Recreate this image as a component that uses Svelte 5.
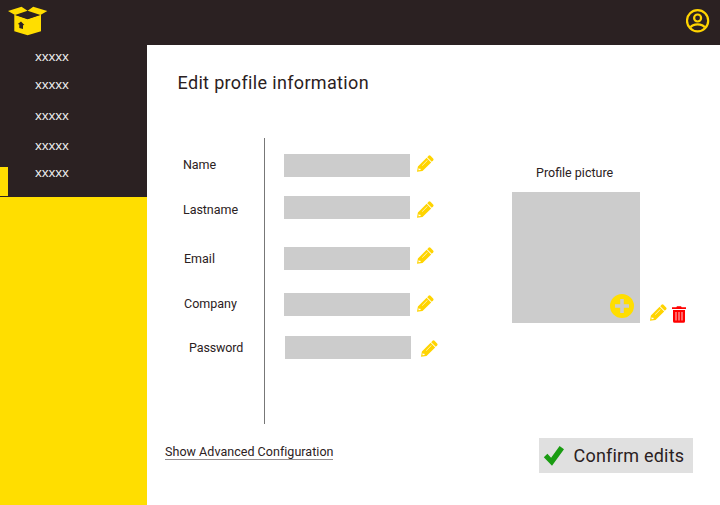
<script>
  const nav = [3, 12, 15, 14, 11];
  const labels = [
    { text: 'Name', gap: 19, indent: 0, spacing: -0.05 },
    { text: 'Lastname', gap: 29, indent: 0, spacing: -0.05 },
    { text: 'Email', gap: 33, indent: 1, spacing: 0 },
    { text: 'Company', gap: 29, indent: 1, spacing: 0 },
    { text: 'Password', gap: 28, indent: 6, spacing: -0.12 }
  ];
  const fields = [
    { gap: 16, indent: 0 },
    { gap: 19, indent: 0 },
    { gap: 28, indent: 0 },
    { gap: 23, indent: 0 },
    { gap: 20, indent: 1 }
  ];
  const pencils = [
    { gap: 17, indent: 0 },
    { gap: 29, indent: 0 },
    { gap: 29, indent: 0 },
    { gap: 31, indent: 0 },
    { gap: 28, indent: 4 }
  ];
</script>

{#snippet pencil()}
  <svg class="pencil" width="17" height="17" viewBox="0 0 17 17">
    <path fill="#ffd400" fill-rule="evenodd" d="M.9 11.500 9.600 2.800l4.600 4.600L5.500 16 0 16.800ZM1.700 13l-.3 2.300 2.300-.4-.3-1.100-1.200-.1ZM5 10.400l.4.400 5.200-5.200-.4-.4Z" />
    <path fill="#ffd400" d="m10.200 2.200 1.300-1.400q1-.9 2 0l2.600 2.600q.9 1 0 2L14.800 6.800Z" />
  </svg>
{/snippet}

<div class="app">
  <header>
    <svg class="logo" width="40" height="30" viewBox="0 0 40 30">
      <path fill="#ffde00" d="M6.300 7.800 19.600 12.200 33 7.800V24.300L19.600 28.200 6.300 24.300Z" />
      <path fill="#2b2122" d="M7 7.800 19.600 3.500 32.500 7.800 19.600 12Z" />
      <path fill="#ffde00" d="M0 4 13.500-.2 19.600 3.700 7 8ZM19.600 3.700 25.200-.2 39.300 4 32.400 8Z" />
      <path fill="#2b2122" d="m13 14.600 3.400 3.500-1.400.2v3.700l-3.700-.9v-3.500l-1.500-.5Z" />
    </svg>
    <svg class="user" width="24" height="24" viewBox="0 0 24 24" fill="none" stroke="#ffd400" stroke-width="2.200">
      <circle cx="11.600" cy="11.800" r="10.600" />
      <circle cx="11.600" cy="9" r="3.500" />
      <path d="M4.400 18.500c1.600-2.700 4-3.100 7.200-3.100s5.600.4 7.200 3.100" />
    </svg>
  </header>
  <div class="body">
    <aside>
      <nav>
        {#each nav as gap, i}
          <a style:margin-top="{gap}px" class:active={i === 4}>xxxxx</a>
        {/each}
      </nav>
    </aside>
    <main>
      <h1>Edit profile information</h1>
      <div class="content">
        <div class="labels">
          {#each labels as l}
            <span style:margin-top="{l.gap}px" style:margin-left="{l.indent}px" style:letter-spacing="{l.spacing}px">{l.text}</span>
          {/each}
        </div>
        <div class="fields">
          {#each fields as f}
            <div class="field" style:margin-top="{f.gap}px" style:margin-left="{f.indent}px"></div>
          {/each}
        </div>
        <div class="pencils">
          {#each pencils as p}
            <div class="edit" style:margin-top="{p.gap}px" style:margin-left="{p.indent}px">{@render pencil()}</div>
          {/each}
        </div>
        <div class="profile">
          <span class="caption">Profile picture</span>
          <div class="picture-row">
            <div class="picture">
              <svg width="24" height="24" viewBox="0 0 24 24">
                <path fill="#ffde00" fill-rule="evenodd" d="M12 0a12 12 0 1 0 0 24 12 12 0 0 0 0-24M10.200 5h3.600v5.200h5.200v3.600h-5.200v5.200h-3.600v-5.200H5v-3.600h5.200Z" />
              </svg>
            </div>
            <div class="edit picture-edit">{@render pencil()}</div>
            <svg class="trash" width="14" height="17" viewBox="0 0 14 17">
              <path fill="#f00" fill-rule="evenodd" d="M0 1.200h4.300L5 .2h4l.7 1h4.300V3H0ZM1 4h12v11.200q0 1.500-1.500 1.500h-9Q1 16.700 1 15.200ZM3.600 6v8.500h.8V6ZM6.600 6v8.500h.8V6ZM9.600 6v8.500h.8V6Z" />
            </svg>
          </div>
        </div>
      </div>
      <footer>
        <a class="advanced">Show Advanced Configuration</a>
        <button>
          <svg width="22" height="22" viewBox="0 0 22 22"><path fill="#1a9c12" d="m.8 12.200 3.600-3.500 3.700 4.100L16.600.9l4.400 3.300L9 20.800Z" /></svg>
          <span>Confirm edits</span>
        </button>
      </footer>
    </main>
  </div>
</div>

<style>
  .app {
    width: 720px;
    height: 505px;
    overflow: hidden;
    display: flex;
    flex-direction: column;
    background: #fff;
    color: #2b2122;
    font-family: Roboto, "Liberation Sans", sans-serif;
  }
  header {
    height: 45px;
    flex: none;
    box-sizing: border-box;
    padding: 7px 10px 0 8px;
    display: flex;
    justify-content: space-between;
    background: #2b2122;
  }
  .logo { overflow: visible; }
  .user { margin-top: 2px; }
  .body { flex: 1; display: flex; min-height: 0; }
  aside { width: 147px; flex: none; background: #ffde00; }
  nav {
    height: 152px;
    display: flex;
    flex-direction: column;
    background: #2b2122;
    overflow: hidden;
  }
  nav a {
    position: relative;
    flex: none;
    padding-left: 35px;
    font: 13px/16px "Noto Sans", sans-serif;
    letter-spacing: -0.1px;
    color: #eee;
  }
  nav a.active::before {
    content: "";
    position: absolute;
    left: 0;
    top: 3px;
    width: 8px;
    height: 29px;
    background: #ffde00;
  }
  main { flex: 1; min-width: 0; display: flex; flex-direction: column; }
  h1 {
    margin: 26px 0 0 30.500px;
    font-size: 18px;
    line-height: 24px;
    font-weight: 400;
    letter-spacing: 0.34px;
  }
  .content { height: 286px; margin-top: 43px; padding-left: 36px; display: flex; }
  .labels {
    width: 81px;
    flex: none;
    border-right: 1px solid #777;
    display: flex;
    flex-direction: column;
  }
  .labels span, .caption { font-size: 12.5px; line-height: 16px; white-space: nowrap; }
  .fields { width: 152px; flex: none; padding-left: 19px; box-sizing: border-box; }
  .field { width: 126px; height: 23px; background: #ccc; }
  .fields, .pencils { display: flex; flex-direction: column; }
  .pencils { width: 95px; flex: none; }
  .edit { width: 17px; height: 17px; }
  .pencil { display: block; }
  .profile { display: flex; flex-direction: column; padding-top: 27px; }
  .caption { margin-left: 24px; }
  .picture-row { display: flex; align-items: flex-end; margin-top: 11px; }
  .picture {
    width: 128px;
    height: 131px;
    box-sizing: border-box;
    padding: 0 6px 5px 0;
    display: flex;
    justify-content: flex-end;
    align-items: flex-end;
    background: #ccc;
  }
  .picture-edit { margin: 0 5px 2px 10px; }
  footer { display: flex; justify-content: space-between; padding: 14px 27px 0 18px; }
  .advanced {
    height: 16px;
    margin-top: 5px;
    font-size: 12.5px;
    line-height: 17px;
    letter-spacing: 0.035px;
    border-bottom: 1px solid #958f90;
  }
  button {
    width: 154px;
    height: 35px;
    margin: 0;
    padding: 0 0 0 4px;
    border: 0;
    display: flex;
    align-items: center;
    gap: 8.500px;
    background: #e0e0e0;
    color: #2b2122;
    font: 18px/24px Roboto, "Liberation Sans", sans-serif;
    letter-spacing: 0.2px;
    white-space: nowrap;
  }
</style>
